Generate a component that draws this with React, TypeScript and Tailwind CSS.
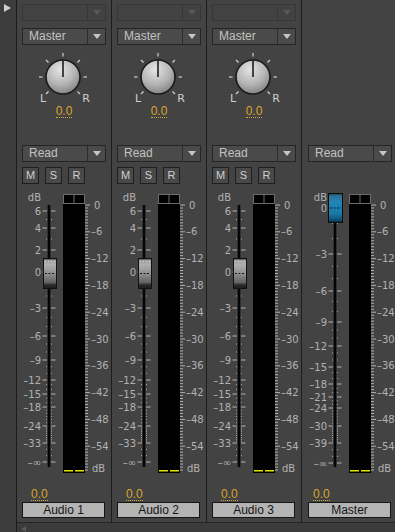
import React from "react";

type Channel = { id: number; name: string; master?: boolean };

const channels: Channel[] = [
  { id: 1, name: "Audio 1" },
  { id: 2, name: "Audio 2" },
  { id: 3, name: "Audio 3" },
  { id: 4, name: "Master", master: true },
];

// fader scale: [label, dB value, y in the fader svg]
const audioScale: [string, number, number][] = [
  ["6", 6, 23],
  ["4", 4, 40],
  ["2", 2, 62],
  ["0", 0, 84],
  ["–3", -3, 120],
  ["–6", -6, 148],
  ["–9", -9, 172],
  ["–12", -12, 192],
  ["–15", -15, 206],
  ["–18", -18, 219],
  ["–24", -24, 238],
  ["–33", -33, 255],
  ["–∞", -36, 274],
];

const masterScale: [string, number, number][] = [
  ["0", 0, 20],
  ["–3", -3, 66],
  ["–6", -6, 103],
  ["–9", -9, 134],
  ["–12", -12, 158],
  ["–15", -15, 179],
  ["–18", -18, 196],
  ["–21", -21, 209],
  ["–24", -24, 220],
  ["–30", -30, 238],
  ["–39", -39, 255],
  ["–∞", -42, 275],
];

const meterLabels = [0, -6, -12, -18, -24, -30, -36, -42, -48, -54];
const meterY = (v: number) => 17 + 4.467 * -v;

const scaleFont = "'DejaVu Sans', sans-serif";

const Dropdown = ({ label, disabled }: { label?: string; disabled?: boolean }) => (
  <div
    className={`h-[17px] w-[84px] flex border ${
      disabled ? "border-[#373737] bg-[#424242]" : "border-[#252525] bg-[#4a4a4a]"
    }`}
  >
    <div className="flex-1 pl-[6px] text-[12px] leading-[15px] text-[#c2c2c2]">{label}</div>
    <div
      className={`w-[18px] border-l flex items-center justify-center ${
        disabled ? "border-[#373737]" : "border-[#2c2c2c]"
      }`}
    >
      <svg width="8" height="5">
        <path d="M0 0h8L4 5z" fill={disabled ? "#595959" : "#c6c6c6"} />
      </svg>
    </div>
  </div>
);

const Knob = ({ id }: { id: number }) => {
  const cx = 46;
  const cy = 27;
  const ticks = [-135, -90, -45, 0, 45, 90, 135];
  return (
    <svg width="95" height="54" className="block mt-[5px]">
      <defs>
        <radialGradient id={`knob${id}`} cx="42%" cy="28%" r="80%">
          <stop offset="0" stopColor="#e4e4e4" />
          <stop offset="0.55" stopColor="#b4b4b4" />
          <stop offset="1" stopColor="#777" />
        </radialGradient>
      </defs>
      {ticks.map((a) => {
        const r = (a * Math.PI) / 180;
        return (
          <line
            key={a}
            x1={cx + 20.5 * Math.sin(r)}
            y1={cy - 20.5 * Math.cos(r)}
            x2={cx + 24 * Math.sin(r)}
            y2={cy - 24 * Math.cos(r)}
            stroke="#cfcfcf"
            strokeWidth="1.2"
          />
        );
      })}
      <circle cx={cx} cy={cy} r="17" fill={`url(#knob${id})`} stroke="#1a1a1a" strokeWidth="1.6" />
      <line x1={cx} y1={cy} x2={cx} y2={cy - 16.5} stroke="#111" strokeWidth="1.5" />
      <text x="26" y="52" textAnchor="middle" fontSize="11" fill="#cfcfcf" fontFamily={scaleFont}>
        L
      </text>
      <text x="69" y="52" textAnchor="middle" fontSize="11" fill="#cfcfcf" fontFamily={scaleFont}>
        R
      </text>
    </svg>
  );
};

const Fader = ({ id, master }: { id: number; master?: boolean }) => {
  const scale = master ? masterScale : audioScale;
  // little dots between the labelled steps
  const dots: number[] = [];
  for (let i = 0; i < scale.length - 1; i++) {
    const [, v1, y1] = scale[i];
    const [, v2, y2] = scale[i + 1];
    const steps = Math.max(1, Math.round(v1 - v2));
    for (let s = 1; s < steps; s++) dots.push(y1 + ((y2 - y1) * s) / steps);
  }
  const minor: number[] = [];
  for (let y = 17; y <= 284; y += 26.8 / 9) minor.push(y);

  return (
    <svg width="95" height="290" className="block mt-[4px]">
      <defs>
        <linearGradient id={`cap${id}`} x1="0" y1="0" x2="0" y2="1">
          {master ? (
            <>
              <stop offset="0" stopColor="#1b3a4c" />
              <stop offset="0.08" stopColor="#2f6f92" />
              <stop offset="0.3" stopColor="#1f86b8" />
              <stop offset="0.7" stopColor="#1a7aa8" />
              <stop offset="0.9" stopColor="#0f5374" />
              <stop offset="1" stopColor="#0a2a3a" />
            </>
          ) : (
            <>
              <stop offset="0" stopColor="#2a2a2a" />
              <stop offset="0.06" stopColor="#9c9c9c" />
              <stop offset="0.2" stopColor="#b0b0b0" />
              <stop offset="0.5" stopColor="#909090" />
              <stop offset="0.8" stopColor="#626262" />
              <stop offset="0.88" stopColor="#2a2a2a" />
              <stop offset="1" stopColor="#1c1c1c" />
            </>
          )}
        </linearGradient>
      </defs>

      {/* fader scale */}
      <text x="24" y="12.5" textAnchor="end" fontSize="10" fill="#b2b2b2" fontFamily={scaleFont}>
        dB
      </text>
      {scale.map(([label, , y]) => (
        <g key={label}>
          <text x="24" y={y + 3.5} textAnchor="end" fontSize="10" fill="#b2b2b2" fontFamily={scaleFont}>
            {label}
          </text>
          <rect x="25.5" y={y - 0.5} width="4.5" height="1" fill="#b4b4b4" />
          <rect x="34" y={y - 0.5} width="4.5" height="1" fill="#b4b4b4" />
        </g>
      ))}
      {dots.map((y, i) => (
        <g key={i}>
          <rect x="29" y={y - 0.5} width="1" height="1" fill="#a8a8a8" />
          <rect x="34" y={y - 0.5} width="1" height="1" fill="#a8a8a8" />
        </g>
      ))}
      <rect x="30" y="17" width="4" height="262" fill="#5a5a5a" />
      <rect x="30.5" y="17" width="3" height="262" fill="#050505" />

      {/* meter */}
      <rect x="46" y="6" width="22" height="279" fill="#000" />
      <rect x="46.5" y="6.5" width="21" height="9" fill="none" stroke="#6c6c6c" />
      <line x1="57" y1="6" x2="57" y2="15.5" stroke="#6c6c6c" />
      <rect x="47" y="282" width="9" height="1.5" fill="#e6e600" />
      <rect x="58" y="282" width="9" height="1.5" fill="#e6e600" />
      {minor.map((y, i) => (
        <rect key={i} x="68" y={y - 0.5} width={i % 9 === 0 ? 5 : 3} height="1" fill="#b0b0b0" />
      ))}
      {meterLabels.map((v) => (
        <text
          key={v}
          x={v === 0 ? 77 : 74}
          y={meterY(v) + 3.5}
          fontSize="10"
          fill="#b2b2b2"
          fontFamily={scaleFont}
        >
          {v === 0 ? "0" : `–${-v}`}
        </text>
      ))}
      <text x="75" y="284" fontSize="10" fill="#b2b2b2" fontFamily={scaleFont}>
        dB
      </text>

      {/* fader cap */}
      {master ? (
        <g>
          <rect x="25.5" y="5.5" width="14" height="29" fill={`url(#cap${id})`} stroke="#0b0b0b" />
          <line x1="27" y1="20" x2="38" y2="20" stroke="#0a1a22" strokeDasharray="2 1.5" />
        </g>
      ) : (
        <g>
          <rect x="26.5" y="70.5" width="13" height="30" fill={`url(#cap${id})`} stroke="#111" />
          <line x1="28" y1="73.5" x2="38" y2="73.5" stroke="#d8d8d8" strokeDasharray="1 2" />
          <line x1="28" y1="85.5" x2="38" y2="85.5" stroke="#1a1a1a" strokeDasharray="2 1.5" />
        </g>
      )}
    </svg>
  );
};

const Amber = () => (
  <span className="inline-block text-[12px] leading-[11px] text-[#d8a62a] border-b border-dotted border-[#d8a62a]">
    0.0
  </span>
);

const Strip = ({ ch }: { ch: Channel }) => (
  <div
    className={`flex flex-col h-full ${
      ch.master ? "w-[93px] pl-[1px]" : "w-[95px] border-r border-[#1d1d1d]"
    }`}
  >
    <div className="h-[145px] flex flex-col">
      {!ch.master && (
        <>
          <div className="mt-[4px] ml-[5px]">
            <Dropdown disabled />
          </div>
          <div className="mt-[7px] ml-[5px]">
            <Dropdown label="Master" />
          </div>
          <Knob id={ch.id} />
          <div className="h-[14px] flex justify-center pt-[2px]">
            <Amber />
          </div>
        </>
      )}
    </div>
    <div className="ml-[5px]">
      <Dropdown label="Read" />
    </div>
    <div className="mt-[5px] ml-[5px] h-[17px] flex gap-[6px]">
      {!ch.master &&
        ["M", "S", "R"].map((b) => (
          <div
            key={b}
            className="w-[17px] h-[17px] border border-[#1e1e1e] bg-[#494949] flex items-center justify-center text-[11px] text-[#cfcfcf]"
          >
            {b}
          </div>
        ))}
    </div>
    <Fader id={ch.id} master={ch.master} />
    <div className={`mt-[3px] h-[14px] ${ch.master ? "pl-[10px]" : "pl-[14px]"}`}>
      <Amber />
    </div>
    <div className="mt-[7px] ml-[5px] w-[83px] h-[16px] border border-[#161616] bg-[#b4b4b4] flex items-center justify-center text-[12px] text-[#141414]">
      {ch.name}
    </div>
  </div>
);

export default function App() {
  return (
    <div className="w-[395px] h-[532px] flex overflow-hidden bg-[#434343] font-['Liberation_Sans',Arial,sans-serif]">
      <div className="w-[17px] h-full bg-[#3c3c3c] border-r border-[#1c1c1c] pt-[4px] pl-[4px]">
        <svg width="8" height="8">
          <path d="M0 0L7 4L0 8z" fill="#cdcdcd" />
        </svg>
      </div>
      <div className="flex-1 flex flex-col">
        <div className="h-[522px] flex">
          {channels.map((ch) => (
            <Strip key={ch.id} ch={ch} />
          ))}
        </div>
        <div className="flex-1 border-t border-[#262626] bg-[#3b3b3b] pl-[4px] pt-[3px]">
          <svg width="5" height="6">
            <path d="M5 0L0 3L5 6z" fill="#585858" />
          </svg>
        </div>
      </div>
    </div>
  );
}
